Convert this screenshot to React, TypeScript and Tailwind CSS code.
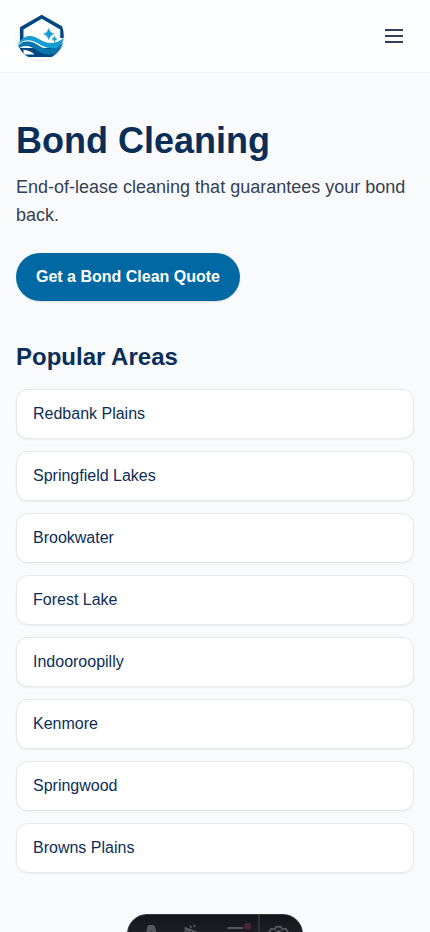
const areas = [
  "Redbank Plains",
  "Springfield Lakes",
  "Brookwater",
  "Forest Lake",
  "Indooroopilly",
  "Kenmore",
  "Springwood",
  "Browns Plains",
];

function Logo() {
  return (
    <svg viewBox="0 0 48 48" className="size-12 rounded-full bg-white shadow-[0_1px_3px_rgba(0,0,0,0.1)]" aria-label="Logo">
      <path d="M5.7 31V16.4L25.7 4.8L46 16.4V26" fill="none" stroke="#034780" strokeWidth="3.6" />
      <path d="M4 36H45L42 42L38 45H6L4 40Z" fill="#034780" />
      <path d="M7.5 37.7Q14 38 18.5 42.6H7.5Z" fill="#fff" />
      <path d="M2 34C7 28 15 28 22 33C29 38 38 39 47.5 30C46 38 41 43.2 33 42.8C22 42 19 34 9 34Q5 34.2 2.5 37Z" fill="#0875ad" />
      <path d="M1.5 33C4 28 8 24.5 13 24C21 23.5 26 30.8 34 31C40 31 45 28.5 48 25.5C46.5 32 43 36 36 36.3C26 36.5 22 28.8 13 28.8C8 28.8 5 30 2 34Z" fill="#169bd3" />
      <path d="M2 33.2C7 27.7 14 27.5 20 31.2C23 33 26 35 29 35.7" fill="none" stroke="#fff" strokeWidth="0.8" />
      <path d="M32.7 16.2Q33.6 20.7 38 22Q33.6 23.3 32.7 27.8Q31.8 23.3 27.4 22Q31.8 20.7 32.7 16.2Z" fill="#169bd3" stroke="#169bd3" strokeWidth="0.4" />
      <path d="M38.5 24Q39 26.4 41.2 27Q39 27.6 38.5 30Q38 27.6 35.8 27Q38 26.4 38.5 24Z" fill="#169bd3" stroke="#169bd3" strokeWidth="0.3" />
    </svg>
  );
}

function DevToolbar() {
  return (
    <div className="fixed bottom-[-22px] left-1/2 flex h-10 w-44 -translate-x-1/2 overflow-hidden rounded-full border border-[#343841] bg-linear-to-b from-[#13151a] to-[#2b2c33]">
      <svg viewBox="0 0 174 38" className="h-[38px] w-[174px]" fill="none" stroke="#56575c" strokeWidth="1.9">
        <path d="M16.5 24L19.5 11.2Q19.9 10 21.2 10H25.2Q26.5 10 26.9 11.2L30.3 24L26 22L24.2 16.5H22.4L20.8 22Z" fill="#56575c" stroke="none" />
        <path d="M62.4 10.5L63.2 12.8M66.7 9.8L66.2 12M57.6 17.5V13.2L72.3 18.8L66 21.2L62 26M59 13.7L64 20" />
        <path d="M99.5 13H115M99.5 19H107M99.5 25H107M112 18.5H115" />
        <circle cx="119.5" cy="11.2" r="3.5" fill="#4b2635" stroke="none" />
        <path d="M131 0V38" stroke="#343841" strokeWidth="1.5" />
        <path d="M147.5 13Q147.7 11.8 149 11.8H152Q153.3 11.8 153.5 13Q154 15 156 14Q157.5 13.2 158.4 14.6L159.6 16.7Q160.2 18 159 18.8Q157.4 20 159 21.2Q160.2 22 159.6 23.3L158.4 25.4Q157.5 26.8 156 26Q154 25 153.5 27H147.5Q147 25 145 26L142.6 25.4L141.4 23.3Q140.8 22 142 21.2Q143.6 20 142 18.8Q140.8 18 141.4 16.7L142.6 14.6Q143.5 13.2 145 14Q147 15 147.5 13Z" strokeLinejoin="round" />
        <circle cx="150.5" cy="20" r="3.7" />
      </svg>
    </div>
  );
}

export default function App() {
  return (
    <div className="h-screen overflow-hidden bg-[#f8fafc] font-['Liberation_Sans',Arial,sans-serif] text-[#0b2e59]">
      <header className="flex h-[73px] items-center justify-between border-b border-slate-100 bg-white/90 px-4">
        <Logo />
        <button aria-label="Open menu" className="flex size-10 items-center justify-center text-slate-700">
          <svg viewBox="0 0 24 24" className="size-6" fill="none" stroke="currentColor" strokeWidth="2">
            <path d="M3 6H21M3 12H21M3 18H21" />
          </svg>
        </button>
      </header>
      <main className="px-4 py-12">
        <h1 className="text-4xl font-bold">Bond Cleaning</h1>
        <p className="mt-3 text-lg leading-7 text-gray-700">
          End-of-lease cleaning that guarantees your bond back.
        </p>
        <a className="mt-6 inline-flex h-12 items-center rounded-full bg-[#0069a3] px-5 font-semibold text-white shadow-[0_1px_2px_rgba(0,0,0,0.1)]">
          Get a Bond Clean Quote
        </a>
        <h2 className="mt-10 text-2xl font-bold">Popular Areas</h2>
        <ul className="mt-4 flex flex-col gap-3">
          {areas.map((area) => (
            <li key={area} className="rounded-xl border border-gray-200 bg-white px-4 py-3 shadow-[0_1px_2px_rgba(0,0,0,0.05)]">
              {area}
            </li>
          ))}
        </ul>
      </main>
      <DevToolbar />
    </div>
  );
}
